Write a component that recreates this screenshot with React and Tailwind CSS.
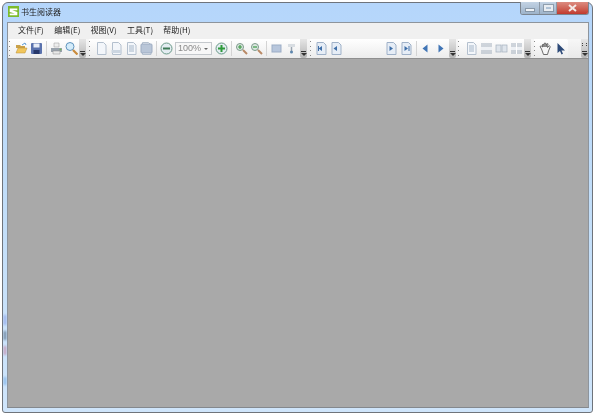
const cjk = { fontFamily: '"Noto Sans CJK SC", "Liberation Sans", sans-serif' }

const menus = ['文件(F)', '编辑(E)', '视图(V)', '工具(T)', '帮助(H)']

function Grip() {
  return (
    <div className="flex h-[15px] w-[3px] shrink-0 flex-col justify-between">
      {[0, 1, 2, 3].map((i) => (
        <span key={i} className="h-px w-px bg-[#8a8a8a]" />
      ))}
    </div>
  )
}

function Sep() {
  return <div className="mx-[2px] h-[15px] w-px shrink-0 bg-[#d4d4d4]" />
}

function Chevron({ dots }) {
  return (
    <div className="flex h-[19px] w-[7px] shrink-0 flex-col items-center justify-end rounded-b-[2px] bg-gradient-to-b from-[#e6e6e6] to-[#b4b4b4] pb-[2px]">
      {dots && <span className="mb-[5px] h-[3px] w-[5px] border-x border-dotted border-[#444]" />}
      <span className="mb-px h-px w-[5px] bg-[#333]" />
      <span className="h-0 w-0 border-x-[3px] border-t-[3px] border-x-transparent border-t-[#333]" />
    </div>
  )
}

function Ico({ children, w = 15 }) {
  return (
    <div className="flex h-[15px] shrink-0 items-center justify-center" style={{ width: w }}>
      <svg width="13" height="13" viewBox="0 0 13 13">{children}</svg>
    </div>
  )
}

const Folder = () => (
  <Ico>
    <path d="M1 3h4l1 1h4v2H1z" fill="#c9a14a" />
    <path d="M1 11 3 6h9l-2 5z" fill="#f1c65c" stroke="#b98c34" strokeWidth=".5" />
    <path d="M7 3l3-2 1 2" fill="none" stroke="#5b9bd5" />
  </Ico>
)
const Save = () => (
  <Ico>
    <rect x="1" y="1" width="11" height="11" rx="1" fill="#5a72ad" />
    <rect x="3.5" y="1.5" width="6" height="4" fill="#e8edf7" />
    <rect x="3.5" y="8" width="6" height="4" fill="#27386b" />
  </Ico>
)
const Print = () => (
  <Ico>
    <path d="M4 1h5v4H4z" fill="#eee" stroke="#999" strokeWidth=".5" />
    <path d="M1 6h11v4H1z" fill="#9aa3ad" />
    <path d="M3 9h7v3H3z" fill="#e9e9e9" stroke="#8a8a8a" strokeWidth=".5" />
    <circle cx="10.5" cy="7.5" r="1" fill="#6fb35a" />
  </Ico>
)
const Search = () => (
  <Ico>
    <circle cx="5" cy="4.500" r="4" fill="#d4ecfa" stroke="#5f93bd" />
    <path d="M8 8l4.500 4.500" stroke="#c98b3c" strokeWidth="2.200" />
  </Ico>
)
const Page = ({ fill = '#f3f6fa', mark }) => (
  <Ico>
    <path d="M2.5 .5h6l2.500 2.500v9.500h-8.500z" fill={fill} stroke="#b4c0ce" />
    {mark === 'low' && <rect x="1.500" y="8" width="10" height="3" fill="#ccd6e1" />}
    {mark === 'mid' && <rect x="4" y="3" width="5" height="7" fill="#ccd6e1" />}
    {mark === 'full' && <rect x="1" y="2" width="11" height="9" rx="1" fill="#b9c6d8" stroke="#9dacc2" />}
  </Ico>
)
const Circle = ({ plus }) => (
  <Ico>
    <circle cx="6.500" cy="6.500" r="5.500" fill="#e3ecf1" stroke="#6a9a88" />
    <path d={plus ? 'M3 6.500h7M6.500 3v7' : 'M3 6.500h7'} stroke={plus ? '#2e9a3a' : '#3d7a55'} strokeWidth="2" />
  </Ico>
)
const Zoom = ({ plus }) => (
  <Ico>
    <circle cx="5" cy="5" r="3.500" fill="#dbe7e0" stroke="#7d9a8c" />
    <path d="M8 8l4 4" stroke="#b98a66" strokeWidth="2" />
    <path d={plus ? 'M3 5h4M5 3v4' : 'M3 5h4'} stroke="#3c9a45" strokeWidth="1.200" />
  </Ico>
)
const Screen = () => (
  <Ico>
    <rect x="2" y="3" width="9" height="7" fill="#b7c6dc" stroke="#9cadc6" />
  </Ico>
)
const Pin = () => (
  <Ico>
    <path d="M3 2h7v3H3z" fill="#d8dde2" />
    <path d="M6.500 5v5" stroke="#9aa5b0" strokeWidth="1.500" />
    <circle cx="6.500" cy="10" r="1.500" fill="#5e86ad" />
  </Ico>
)
const Nav = ({ d }) => (
  <Ico>
    <path d="M2 .5h6.500l2.500 2.500v9.500h-9z" fill="#e6edf6" stroke="#9fb1c8" />
    <path d={d} fill="#3f6fa8" />
  </Ico>
)
const Arrow = ({ d }) => (
  <Ico>
    <path d={d} fill="#3f74b5" />
  </Ico>
)
const Rows = ({ n }) => (
  <Ico>
    {n === 'two' ? (
      <>
        <rect x="1" y="3" width="5" height="7" fill="#dfe5ec" stroke="#a3afbd" strokeWidth=".7" />
        <rect x="7" y="3" width="5" height="7" fill="#dfe5ec" stroke="#a3afbd" strokeWidth=".7" />
      </>
    ) : (
      <>
        <path d="M1 2h11M1 4h11" stroke="#a3afbd" strokeWidth="1" />
        <rect x="1" y="5" width="11" height="3" fill="#eef1f5" />
        <path d="M1 9h11M1 11h11" stroke="#a3afbd" strokeWidth="1" />
        {n === 'gap' && <path d="M6.500 1v11" stroke="#fff" />}
      </>
    )}
  </Ico>
)
const Hand = () => (
  <Ico>
    <path d="M2.500 7 1 4.500l1.200-.6L3.500 5V2.500h1.300L5 5l.3-3.800h1.300L7 5l.7-3.200h1.300L8.500 5.500l1.800-1.700 1 .8L9.500 9l-1 3.500H4.500z" fill="#f6f6f6" stroke="#4a4a4a" strokeWidth=".8" />
  </Ico>
)
const Pointer = () => (
  <Ico>
    <path d="M3.500 1v10l2.500-2 1.500 3.500 1.500-.7L7.500 8.500H11z" fill="#2d4a78" />
  </Ico>
)

function Band({ children }) {
  return <div className="flex h-[19px] shrink-0 items-center rounded-r-[2px] bg-gradient-to-b from-white to-[#ececec]">{children}</div>
}

export default function App() {
  return (
    <div className="h-[415px] w-[600px] overflow-hidden bg-white pb-[2px] pl-[2px] pr-[7px] pt-[2px] blur-[0.35px]" style={cjk}>
      <div className="relative flex h-[411px] w-[591px] flex-col rounded-t-[6px] rounded-b-[3px] border border-[#6f747b] bg-gradient-to-b from-[#b5d6fb] via-[#c2def9] to-[#cfe5fb] pb-[4px] pl-[4px] pr-[3px]">
        {/* glass reflections down the left edge */}
        <span className="absolute left-[1px] top-[312px] h-[10px] w-[2px] bg-[#8fa6ea] blur-[1px]" />
        <span className="absolute left-[1px] top-[328px] h-[9px] w-[2px] bg-[#5f7790] blur-[1px]" />
        <span className="absolute left-[1px] top-[343px] h-[9px] w-[2px] bg-[#c48fae] blur-[1px]" />
        <span className="absolute left-[1px] top-[374px] h-[8px] w-[2px] bg-[#7fb2e8] blur-[1px]" />

        {/* title bar */}
        <div className="relative flex h-[19px] shrink-0 items-center pb-[2px] pl-[1px]">
          <svg width="11" height="11" viewBox="0 0 13 13" className="shrink-0">
            <rect width="13" height="13" fill="#7cbb2c" />
            <path d="M2 3h9v2H5l6 2v4H2V9h6L2 7z" fill="#fff" />
          </svg>
          <span className="ml-[2px] text-[8px] leading-none text-[#222]">书生阅读器</span>
          <div className="absolute -top-px right-0 flex h-[13px] overflow-hidden rounded-b-[3px] border border-t-0 border-[#7c8590]">
            <div className="flex w-[19px] items-center justify-center border-r border-[#8d99a6] bg-gradient-to-b from-[#c3d3e4] to-[#9db3ca]">
              <span className="mt-[3px] h-[2px] w-[8px] bg-[#eef2f6] ring-1 ring-[#66717d]/50" />
            </div>
            <div className="flex w-[17px] items-center justify-center border-r border-[#8d99a6] bg-gradient-to-b from-[#c3d3e4] to-[#9db3ca]">
              <span className="h-[6px] w-[9px] border-2 border-[#e8edf2] ring-1 ring-[#66717d]/50" />
            </div>
            <div className="flex w-[31px] items-center justify-center bg-gradient-to-b from-[#dc8b80] to-[#c0392e]">
              <svg width="9" height="8" viewBox="0 0 9 8"><path d="M1 1l7 6M8 1 1 7" stroke="#f4e9e7" strokeWidth="2" /></svg>
            </div>
          </div>
        </div>

        {/* client area */}
        <div className="flex min-h-0 flex-1 flex-col border border-[#8d949c] border-b-[#84888d] bg-[#a9a9a9]">
          <div className="flex h-[16px] shrink-0 items-center gap-[10.300px] bg-[#f0f0f0] pb-[2px] pl-[10px] text-[8px] leading-none text-[#222]">
            {menus.map((m) => (
              <span key={m} className="w-[26px] whitespace-nowrap">{m}</span>
            ))}
          </div>
          <div className="flex h-[19px] shrink-0 items-center bg-gradient-to-b from-[#f7f7f7] to-[#e9e9e9] pl-[1px]">
            <Band>
              <Grip />
              <div className="w-[2px]" />
              <Folder />
              <Save />
              <Sep />
              <Print />
              <Search />
              <Chevron />
            </Band>
            <div className="w-[3px]" />
            <Band>
              <Grip />
              <div className="w-[2px]" />
              <Page />
              <Page mark="low" />
              <Page mark="mid" />
              <Page mark="full" />
              <Sep />
              <Circle />
              <div className="ml-[1px] flex h-[13px] w-[37px] shrink-0 items-center justify-between border border-[#c4c8cc] bg-[#f7f7f7] pl-[2px] pr-[3px] text-[9px] leading-none text-[#8a8a8a]" style={{ fontFamily: '"Liberation Sans", sans-serif' }}>
                <span>100%</span>
                <span className="h-0 w-0 border-x-[2px] border-t-[2px] border-x-transparent border-t-[#666]" />
              </div>
              <div className="w-[2px]" />
              <Circle plus />
              <Sep />
              <Zoom plus />
              <Zoom />
              <Sep />
              <Screen />
              <Pin />
              <div className="w-[1px]" />
              <Chevron />
            </Band>
            <div className="w-[3px]" />
            <Band>
              <Grip />
              <div className="w-[1px]" />
              <Nav d="M3.500 6.500 7 4v5zM3 4h1v5H3z" />
              <Nav d="M3.500 6.500 7 4v5z" />
              <div className="w-[40px]" />
              <Nav d="M8 6.500 4.500 4v5z" />
              <Nav d="M8 6.500 4.500 4v5zM8.500 4h1v5h-1z" />
              <Sep />
              <div className="-ml-px" />
              <Arrow d="M3.500 6.500 8.500 2.500v8z" />
              <Arrow d="M9.500 6.500 4.500 2.500v8z" />
              <div className="w-[1px]" />
              <Chevron />
            </Band>
            <div className="w-[2px]" />
            <Band>
              <Grip />
              <div className="w-[3px]" />
              <Page mark="mid" />
              <Rows />
              <Rows n="two" />
              <Rows n="gap" />
              <Chevron />
            </Band>
            <div className="w-[3px]" />
            <Band>
              <Grip />
              <div className="w-[1px]" />
              <Hand />
              <Pointer />
            </Band>
            <div className="ml-auto">
              <Chevron dots />
            </div>
          </div>
          <div className="min-h-0 flex-1 border-t border-[#8f8f8f] bg-[#a9a9a9]" />
        </div>
      </div>
    </div>
  )
}
